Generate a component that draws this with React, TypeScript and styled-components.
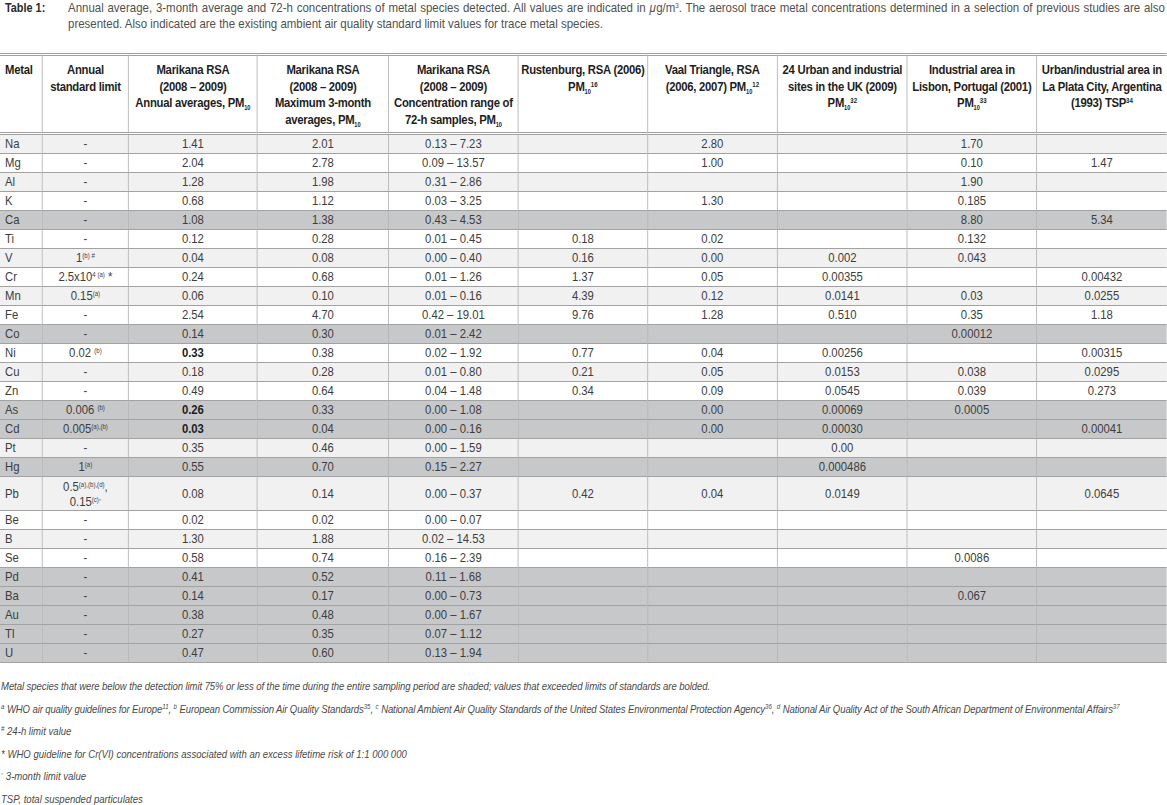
import React from "react";
import styled, { createGlobalStyle } from "styled-components";

/* The reference is set in a condensed grotesque. No condensed face is
   installed, so the whole sheet is laid out wider and squeezed
   horizontally by SQUEEZE; every horizontal length goes through u(). */
const SQUEEZE = 0.87;
const u = (n: number) => `${(n / SQUEEZE).toFixed(3)}px`;

const FONT = `"Liberation Sans", Arial, sans-serif`;

const GlobalStyle = createGlobalStyle`
  html, body { margin: 0; padding: 0; background: #ffffff; }
  body { font-family: ${FONT}; color: #3d3d3d; }
  * { box-sizing: border-box; }
`;

const Page = styled.div`
  width: 1167px;
  height: 805px;
  overflow: hidden;
  background: #fff;
`;

const Sheet = styled.div`
  width: ${u(1167)};
  transform: scaleX(${SQUEEZE});
  transform-origin: 0 0;
`;

const Caption = styled.div`
  display: flex;
  font-size: 13.2px;
  line-height: 16px;
  color: #505050;
  padding-right: ${u(2)};
`;

const CaptionLabel = styled.div`
  flex: 0 0 ${u(68)};
  padding-left: ${u(5)};
  font-weight: bold;
  font-size: 12.5px;
  color: #2a2a2a;
`;

const CaptionText = styled.div`
  flex: 1;
  text-align: justify;
`;

const Micro = styled.span`
  font-style: italic;
  padding-right: 0.5px;
`;

const Table = styled.table`
  margin-top: 21px;
  width: ${u(1167)};
  table-layout: fixed;
  border-collapse: separate;
  border-spacing: 0;
  font-size: 13px;
`;

const HeadCell = styled.th<{ $left?: boolean }>`
  border-top: 3px double #a0a0a0;
  border-bottom: 3px double #a0a0a0;
  border-left: ${(p) => (p.$left ? "none" : "1px solid #b4b4b4")};
  padding: 6px ${u(2)} 4px ${(p) => (p.$left ? u(5) : u(2))};
  line-height: 16.5px;
  letter-spacing: -0.3px;
  vertical-align: top;
  text-align: ${(p) => (p.$left ? "left" : "center")};
  font-weight: bold;
  color: #1e1e1e;
  white-space: nowrap;
`;

type Tone = "light" | "white" | "dark";
const toneColor: Record<Tone, string> = {
  light: "#f1f1f2",
  white: "#ffffff",
  dark: "#c7c8ca",
};

const Row = styled.tr<{ $tone: Tone }>`
  background: ${(p) => toneColor[p.$tone]};
`;

const Cell = styled.td<{ $left?: boolean; $bold?: boolean; $tall?: boolean }>`
  border-bottom: 1px solid #a2a2a2;
  border-left: ${(p) => (p.$left ? "none" : "1px solid #b4b4b4")};
  padding-top: ${(p) => (p.$tall ? "1.5px" : "0")};
  padding-bottom: ${(p) => (p.$tall ? "1.5px" : "0")};
  padding-left: ${(p) => (p.$left ? u(5) : u(2))};
  padding-right: ${u(2)};
  line-height: ${(p) => (p.$tall ? "15px" : "18px")};
  text-align: ${(p) => (p.$left ? "left" : "center")};
  vertical-align: middle;
  font-weight: ${(p) => (p.$bold ? "bold" : "normal")};
  color: ${(p) => (p.$bold ? "#1e1e1e" : "#3d3d3d")};
  white-space: nowrap;
`;

const Sub = styled.sub`
  font-size: 6.5px;
  line-height: 0;
  vertical-align: -3px;
  letter-spacing: 0;
`;

const Sup = styled.sup`
  font-size: 7px;
  line-height: 0;
  vertical-align: 4px;
  letter-spacing: 0;
`;

const Notes = styled.div`
  margin-top: 16px;
  display: flex;
  flex-direction: column;
  gap: 8.6px;
  font-size: 11px;
  line-height: 14px;
  font-style: italic;
  color: #4a4a4a;
  padding-left: ${u(1)};
  white-space: nowrap;
`;

const Note = styled.div<{ $track?: number }>`
  letter-spacing: ${(p) => p.$track ?? 0}px;
`;

const PM = () => (
  <>
    PM<Sub>10</Sub>
  </>
);

type RowData = {
  metal: string;
  limit: React.ReactNode;
  vals: string[];
  tone: Tone;
  bold?: boolean;
  tall?: boolean;
};

const dash = "-";

const rows: RowData[] = [
  { metal: "Na", limit: dash, vals: ["1.41", "2.01", "0.13 – 7.23", "", "2.80", "", "1.70", ""], tone: "light" },
  { metal: "Mg", limit: dash, vals: ["2.04", "2.78", "0.09 – 13.57", "", "1.00", "", "0.10", "1.47"], tone: "white" },
  { metal: "Al", limit: dash, vals: ["1.28", "1.98", "0.31 – 2.86", "", "", "", "1.90", ""], tone: "light" },
  { metal: "K", limit: dash, vals: ["0.68", "1.12", "0.03 – 3.25", "", "1.30", "", "0.185", ""], tone: "white" },
  { metal: "Ca", limit: dash, vals: ["1.08", "1.38", "0.43 – 4.53", "", "", "", "8.80", "5.34"], tone: "dark" },
  { metal: "Ti", limit: dash, vals: ["0.12", "0.28", "0.01 – 0.45", "0.18", "0.02", "", "0.132", ""], tone: "white" },
  { metal: "V", limit: <>1<Sup>(b) #</Sup></>, vals: ["0.04", "0.08", "0.00 – 0.40", "0.16", "0.00", "0.002", "0.043", ""], tone: "light" },
  { metal: "Cr", limit: <>2.5x10<Sup>4 (a)</Sup> *</>, vals: ["0.24", "0.68", "0.01 – 1.26", "1.37", "0.05", "0.00355", "", "0.00432"], tone: "white" },
  { metal: "Mn", limit: <>0.15<Sup>(a)</Sup></>, vals: ["0.06", "0.10", "0.01 – 0.16", "4.39", "0.12", "0.0141", "0.03", "0.0255"], tone: "light" },
  { metal: "Fe", limit: dash, vals: ["2.54", "4.70", "0.42 – 19.01", "9.76", "1.28", "0.510", "0.35", "1.18"], tone: "white" },
  { metal: "Co", limit: dash, vals: ["0.14", "0.30", "0.01 – 2.42", "", "", "", "0.00012", ""], tone: "dark" },
  { metal: "Ni", limit: <>0.02 <Sup>(b)</Sup></>, vals: ["0.33", "0.38", "0.02 – 1.92", "0.77", "0.04", "0.00256", "", "0.00315"], tone: "white", bold: true },
  { metal: "Cu", limit: dash, vals: ["0.18", "0.28", "0.01 – 0.80", "0.21", "0.05", "0.0153", "0.038", "0.0295"], tone: "light" },
  { metal: "Zn", limit: dash, vals: ["0.49", "0.64", "0.04 – 1.48", "0.34", "0.09", "0.0545", "0.039", "0.273"], tone: "white" },
  { metal: "As", limit: <>0.006 <Sup>(b)</Sup></>, vals: ["0.26", "0.33", "0.00 – 1.08", "", "0.00", "0.00069", "0.0005", ""], tone: "dark", bold: true },
  { metal: "Cd", limit: <>0.005<Sup>(a),(b)</Sup></>, vals: ["0.03", "0.04", "0.00 – 0.16", "", "0.00", "0.00030", "", "0.00041"], tone: "dark", bold: true },
  { metal: "Pt", limit: dash, vals: ["0.35", "0.46", "0.00 – 1.59", "", "", "0.00", "", ""], tone: "light" },
  { metal: "Hg", limit: <>1<Sup>(a)</Sup></>, vals: ["0.55", "0.70", "0.15 – 2.27", "", "", "0.000486", "", ""], tone: "dark" },
  {
    metal: "Pb",
    limit: (
      <>
        0.5<Sup>(a),(b),(d)</Sup>,
        <br />
        0.15<Sup>(c)◦</Sup>
      </>
    ),
    vals: ["0.08", "0.14", "0.00 – 0.37", "0.42", "0.04", "0.0149", "", "0.0645"],
    tone: "light",
    tall: true,
  },
  { metal: "Be", limit: dash, vals: ["0.02", "0.02", "0.00 – 0.07", "", "", "", "", ""], tone: "white" },
  { metal: "B", limit: dash, vals: ["1.30", "1.88", "0.02 – 14.53", "", "", "", "", ""], tone: "light" },
  { metal: "Se", limit: dash, vals: ["0.58", "0.74", "0.16 – 2.39", "", "", "", "0.0086", ""], tone: "white" },
  { metal: "Pd", limit: dash, vals: ["0.41", "0.52", "0.11 – 1.68", "", "", "", "", ""], tone: "dark" },
  { metal: "Ba", limit: dash, vals: ["0.14", "0.17", "0.00 – 0.73", "", "", "", "0.067", ""], tone: "dark" },
  { metal: "Au", limit: dash, vals: ["0.38", "0.48", "0.00 – 1.67", "", "", "", "", ""], tone: "dark" },
  { metal: "Tl", limit: dash, vals: ["0.27", "0.35", "0.07 – 1.12", "", "", "", "", ""], tone: "dark" },
  { metal: "U", limit: dash, vals: ["0.47", "0.60", "0.13 – 1.94", "", "", "", "", ""], tone: "dark" },
];

const widths = [42, 86, 129, 131, 130, 129, 130, 130, 129, 131];

const Col = styled.col<{ $w: number }>`
  width: ${(p) => u(p.$w)};
`;

export default function App() {
  return (
    <Page>
      <GlobalStyle />
      <Sheet>
        <Caption>
          <CaptionLabel>Table 1:</CaptionLabel>
          <CaptionText>
            Annual average, 3-month average and 72-h concentrations of metal species detected. All values are indicated in{" "}
            <Micro>μ</Micro>g/m<Sup>3</Sup>. The aerosol trace metal concentrations determined in a selection of previous studies are also presented. Also indicated are the existing ambient air quality standard limit values for trace metal species.
          </CaptionText>
        </Caption>
        <Table>
          <colgroup>
            {widths.map((w, i) => (
              <Col key={i} $w={w} />
            ))}
          </colgroup>
          <thead>
            <tr>
              <HeadCell $left>Metal</HeadCell>
              <HeadCell>
                Annual
                <br />
                standard limit
              </HeadCell>
              <HeadCell>
                Marikana RSA
                <br />
                (2008 – 2009)
                <br />
                Annual averages, <PM />
              </HeadCell>
              <HeadCell>
                Marikana RSA
                <br />
                (2008 – 2009)
                <br />
                Maximum 3-month
                <br />
                averages, <PM />
              </HeadCell>
              <HeadCell>
                Marikana RSA
                <br />
                (2008 – 2009)
                <br />
                Concentration range of
                <br />
                72-h samples, <PM />
              </HeadCell>
              <HeadCell>
                Rustenburg, RSA (2006)
                <br />
                <PM />
                <Sup>16</Sup>
              </HeadCell>
              <HeadCell>
                Vaal Triangle, RSA
                <br />
                (2006, 2007) <PM />
                <Sup>12</Sup>
              </HeadCell>
              <HeadCell>
                24 Urban and industrial
                <br />
                sites in the UK (2009)
                <br />
                <PM />
                <Sup>32</Sup>
              </HeadCell>
              <HeadCell>
                Industrial area in
                <br />
                Lisbon, Portugal (2001)
                <br />
                <PM />
                <Sup>33</Sup>
              </HeadCell>
              <HeadCell>
                Urban/industrial area in
                <br />
                La Plata City, Argentina
                <br />
                (1993) TSP<Sup>34</Sup>
              </HeadCell>
            </tr>
          </thead>
          <tbody>
            {rows.map((r) => (
              <Row key={r.metal} $tone={r.tone}>
                <Cell $left $tall={r.tall}>
                  {r.metal}
                </Cell>
                <Cell $tall={r.tall}>{r.limit}</Cell>
                {r.vals.map((v, i) => (
                  <Cell key={i} $bold={r.bold && i === 0} $tall={r.tall}>
                    {v}
                  </Cell>
                ))}
              </Row>
            ))}
          </tbody>
        </Table>
        <Notes>
          <Note $track={-0.1}>
            Metal species that were below the detection limit 75% or less of the time during the entire sampling period are shaded; values that exceeded limits of standards are bolded.
          </Note>
          <Note $track={-0.15}>
            <Sup>a</Sup> WHO air quality guidelines for Europe<Sup>11</Sup>, <Sup>b</Sup> European Commission Air Quality Standards<Sup>35</Sup>, <Sup>c</Sup> National Ambient Air Quality Standards of the United States Environmental Protection Agency<Sup>36</Sup>, <Sup>d</Sup> National Air Quality Act of the South African Department of Environmental Affairs<Sup>37</Sup>
          </Note>
          <Note>
            <Sup>#</Sup> 24-h limit value
          </Note>
          <Note>* WHO guideline for Cr(VI) concentrations associated with an excess lifetime risk of 1:1 000 000</Note>
          <Note>
            <Sup>◦</Sup> 3-month limit value
          </Note>
          <Note>TSP, total suspended particulates</Note>
        </Notes>
      </Sheet>
    </Page>
  );
}
